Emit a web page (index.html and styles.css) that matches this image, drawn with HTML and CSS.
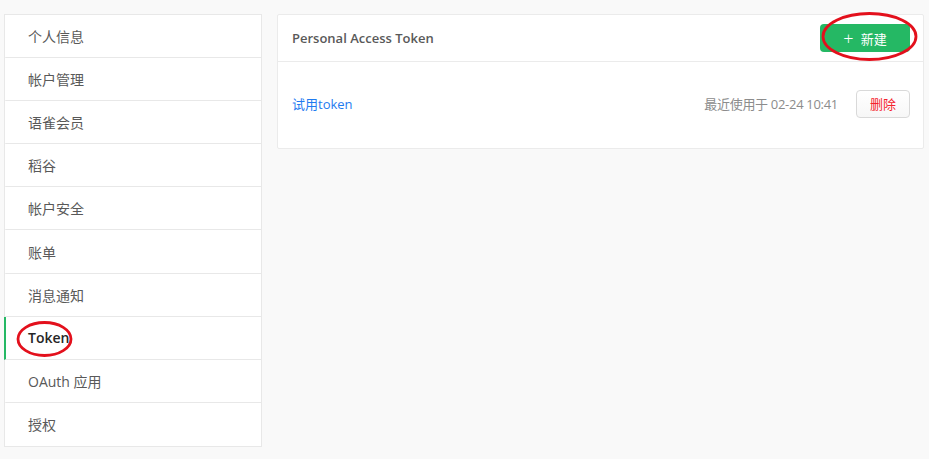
FILE: index.html
```html
<!DOCTYPE html>
<html lang="zh-CN">

<head>
    <meta charset="UTF-8">
    <meta name="viewport" content="width=device-width, initial-scale=1.0">
    <title>Token</title>
    <link rel="stylesheet" href="styles.css">
</head>

<body>
    <div class="page">
        <ul class="side-menu">
            <li class="menu-item">个人信息</li>
            <li class="menu-item">帐户管理</li>
            <li class="menu-item">语雀会员</li>
            <li class="menu-item">稻谷</li>
            <li class="menu-item">帐户安全</li>
            <li class="menu-item">账单</li>
            <li class="menu-item">消息通知</li>
            <li class="menu-item active">Token</li>
            <li class="menu-item">OAuth 应用</li>
            <li class="menu-item">授权</li>
        </ul>

        <div class="card">
            <div class="card-header">
                <span class="card-title">Personal Access Token</span>
                <button class="btn-new"><span class="plus">+</span>新建</button>
            </div>
            <div class="token-row">
                <a class="token-name" href="#">试用token</a>
                <span class="token-time">最近使用于 02-24 10:41</span>
                <button class="btn-delete">删除</button>
            </div>
        </div>
    </div>

    <!-- annotation marks -->
    <svg class="marks" width="929" height="459" viewBox="0 0 929 459">
        <ellipse cx="44.5" cy="339" rx="26.5" ry="16.5" />
        <ellipse cx="869.5" cy="36.5" rx="46.5" ry="23" />
    </svg>
</body>

</html>
```

FILE: styles.css
```css
body {
    margin: 0;
    background-color: #f9f9f9;
    font-family: "Open Sans", "Noto Sans CJK SC", sans-serif;
    font-size: 14px;
    color: #595959;
}

.page {
    display: flex;
    align-items: flex-start;
    gap: 15px;
    padding: 14px 5px 0 4px;
}

.side-menu {
    list-style: none;
    margin: 0;
    padding: 0;
    width: 258px;
    flex-shrink: 0;
    box-sizing: border-box;
    background-color: #fff;
    border: 1px solid #e8e8e8;
}

.menu-item {
    height: 43.1px;
    box-sizing: border-box;
    display: flex;
    align-items: center;
    border-bottom: 1px solid #e8e8e8;
    border-left: 2px solid transparent;
    margin-left: -1px;
    padding-left: 22px;
}

.menu-item:last-child {
    border-bottom: none;
}

.menu-item.active {
    border-left-color: #25b864;
    color: #262626;
    font-weight: 600;
}

.card {
    flex: 1;
    background-color: #fff;
    border: 1px solid #ebebeb;
    border-radius: 2px;
}

.card-header {
    height: 46px;
    display: flex;
    align-items: center;
    justify-content: space-between;
    padding: 0 13px 0 14px;
    border-bottom: 1px solid #ebebeb;
}

.card-title {
    font-size: 13px;
    font-weight: 600;
    color: #595959;
}

.btn-new {
    width: 90px;
    height: 28px;
    border: none;
    border-radius: 4px;
    background-color: #25b864;
    color: #fff;
    font-family: inherit;
    font-size: 13px;
    padding: 0;
    display: flex;
    align-items: center;
    justify-content: center;
}

.btn-new .plus {
    font-size: 18px;
    font-weight: 300;
    margin-right: 7px;
    line-height: 1;
}

.token-row {
    height: 83px;
    padding: 0 13px 3px 14px;
    display: flex;
    align-items: center;
}

.token-name {
    color: #1f7bf0;
    text-decoration: none;
    font-size: 13px;
}

.token-time {
    margin-left: auto;
    color: #8c8c8c;
    font-size: 13px;
    letter-spacing: -0.3px;
}

.btn-delete {
    margin-left: 18px;
    width: 54px;
    height: 28px;
    padding: 0;
    border: 1px solid #d9d9d9;
    border-radius: 4px;
    background: linear-gradient(#fff, #f7f7f7);
    color: #f5222d;
    font-family: inherit;
    font-size: 13px;
}

.marks {
    position: absolute;
    left: 0;
    top: 0;
    pointer-events: none;
}

.marks ellipse {
    fill: none;
    stroke: #e3101c;
    stroke-width: 2.8;
}
```
